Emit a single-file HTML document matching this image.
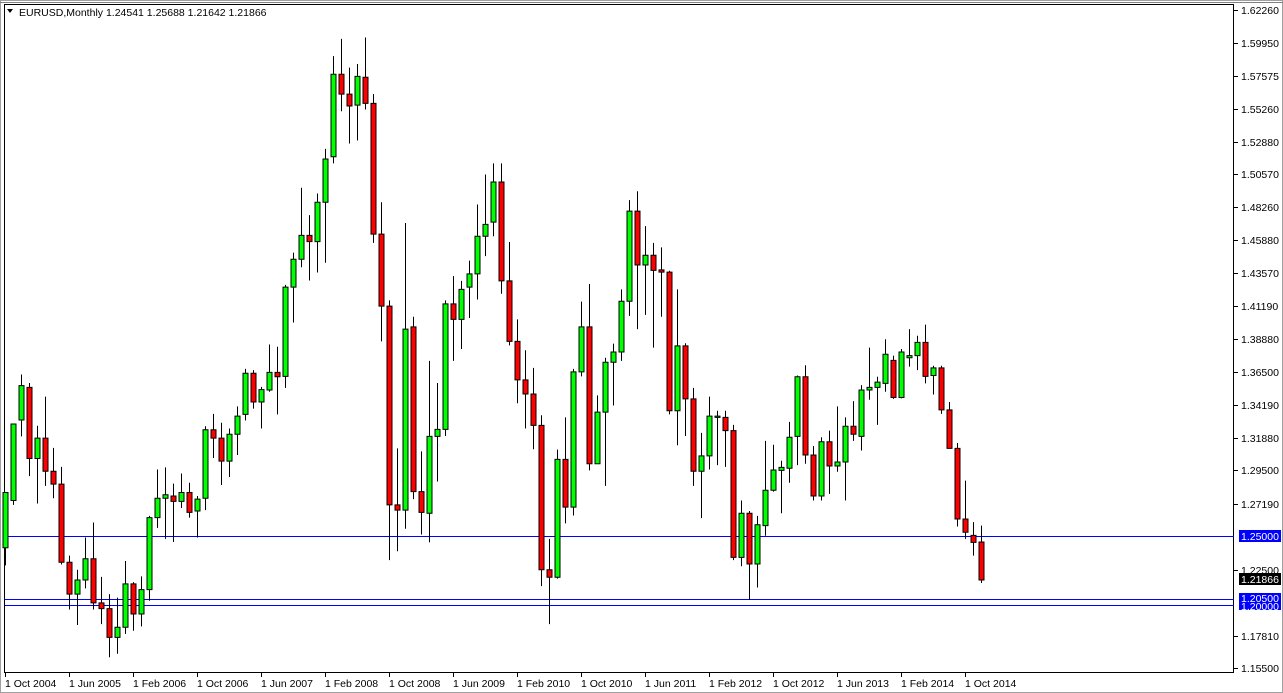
<!DOCTYPE html>
<html><head><meta charset="utf-8"><style>
html,body{margin:0;padding:0;background:#fff;width:1283px;height:693px;overflow:hidden}
svg{display:block}
text{font-family:"Liberation Sans",sans-serif;font-size:10.5px;fill:#000}
</style></head><body>
<svg width="1283" height="693" viewBox="0 0 1283 693" xmlns="http://www.w3.org/2000/svg">
<rect x="0" y="0" width="1283" height="693" fill="#fff"/>
<rect x="0.5" y="0.5" width="1282" height="692" fill="none" stroke="#a0a0a0"/>
<line x1="0" y1="2.5" x2="1283" y2="2.5" stroke="#808080"/>
<rect x="4.5" y="4.5" width="1229" height="668" fill="none" stroke="#000"/>
<!-- horizontal lines -->
<line x1="5" y1="536.5" x2="1234" y2="536.5" stroke="#0000ff"/>
<line x1="5" y1="599.5" x2="1234" y2="599.5" stroke="#0000ff"/>
<line x1="5" y1="605.5" x2="1234" y2="605.5" stroke="#0000ff"/>
<g transform="scale(1,0.4417)" stroke="#000" stroke-width="1">
<g id="c">
<line x1="5.5" y1="1115" x2="5.5" y2="1280" vector-effect="non-scaling-stroke"/><rect x="3" y="1115" width="5" height="125" fill="#00ff00" vector-effect="non-scaling-stroke"/>
<line x1="13.5" y1="960" x2="13.5" y2="1143" vector-effect="non-scaling-stroke"/><rect x="11" y="960" width="5" height="173" fill="#00ff00" vector-effect="non-scaling-stroke"/>
<line x1="21.5" y1="848" x2="21.5" y2="988" vector-effect="non-scaling-stroke"/><rect x="19" y="873" width="5" height="78" fill="#00ff00" vector-effect="non-scaling-stroke"/>
<line x1="29.5" y1="867" x2="29.5" y2="1078" vector-effect="non-scaling-stroke"/><rect x="27" y="877" width="5" height="161" fill="#ff0000" vector-effect="non-scaling-stroke"/>
<line x1="37.5" y1="964" x2="37.5" y2="1140" vector-effect="non-scaling-stroke"/><rect x="35" y="992" width="5" height="46" fill="#00ff00" vector-effect="non-scaling-stroke"/>
<line x1="45.5" y1="898" x2="45.5" y2="1100" vector-effect="non-scaling-stroke"/><rect x="43" y="992" width="5" height="75" fill="#ff0000" vector-effect="non-scaling-stroke"/>
<line x1="53.5" y1="1014" x2="53.5" y2="1128" vector-effect="non-scaling-stroke"/><rect x="51" y="1067" width="5" height="29" fill="#ff0000" vector-effect="non-scaling-stroke"/>
<line x1="61.5" y1="1057" x2="61.5" y2="1278" vector-effect="non-scaling-stroke"/><rect x="59" y="1096" width="5" height="177" fill="#ff0000" vector-effect="non-scaling-stroke"/>
<line x1="69.5" y1="1258" x2="69.5" y2="1380" vector-effect="non-scaling-stroke"/><rect x="67" y="1273" width="5" height="72" fill="#ff0000" vector-effect="non-scaling-stroke"/>
<line x1="77.5" y1="1290" x2="77.5" y2="1415" vector-effect="non-scaling-stroke"/><rect x="75" y="1313" width="5" height="32" fill="#00ff00" vector-effect="non-scaling-stroke"/>
<line x1="85.5" y1="1217" x2="85.5" y2="1332" vector-effect="non-scaling-stroke"/><rect x="83" y="1265" width="5" height="48" fill="#00ff00" vector-effect="non-scaling-stroke"/>
<line x1="93.5" y1="1183" x2="93.5" y2="1380" vector-effect="non-scaling-stroke"/><rect x="91" y="1265" width="5" height="100" fill="#ff0000" vector-effect="non-scaling-stroke"/>
<line x1="101.5" y1="1306" x2="101.5" y2="1413" vector-effect="non-scaling-stroke"/><rect x="99" y="1365" width="5" height="13" fill="#ff0000" vector-effect="non-scaling-stroke"/>
<line x1="109.5" y1="1345" x2="109.5" y2="1488" vector-effect="non-scaling-stroke"/><rect x="107" y="1378" width="5" height="65" fill="#ff0000" vector-effect="non-scaling-stroke"/>
<line x1="117.5" y1="1353" x2="117.5" y2="1480" vector-effect="non-scaling-stroke"/><rect x="115" y="1420" width="5" height="23" fill="#00ff00" vector-effect="non-scaling-stroke"/>
<line x1="125.5" y1="1270" x2="125.5" y2="1435" vector-effect="non-scaling-stroke"/><rect x="123" y="1322" width="5" height="98" fill="#00ff00" vector-effect="non-scaling-stroke"/>
<line x1="133.5" y1="1318" x2="133.5" y2="1428" vector-effect="non-scaling-stroke"/><rect x="131" y="1322" width="5" height="68" fill="#ff0000" vector-effect="non-scaling-stroke"/>
<line x1="141.5" y1="1305" x2="141.5" y2="1418" vector-effect="non-scaling-stroke"/><rect x="139" y="1335" width="5" height="55" fill="#00ff00" vector-effect="non-scaling-stroke"/>
<line x1="149.5" y1="1168" x2="149.5" y2="1360" vector-effect="non-scaling-stroke"/><rect x="147" y="1172" width="5" height="163" fill="#00ff00" vector-effect="non-scaling-stroke"/>
<line x1="157.5" y1="1063" x2="157.5" y2="1195" vector-effect="non-scaling-stroke"/><rect x="155" y="1128" width="5" height="44" fill="#00ff00" vector-effect="non-scaling-stroke"/>
<line x1="165.5" y1="1058" x2="165.5" y2="1220" vector-effect="non-scaling-stroke"/><rect x="163" y="1120" width="5" height="8" fill="#00ff00" vector-effect="non-scaling-stroke"/>
<line x1="173.5" y1="1095" x2="173.5" y2="1227" vector-effect="non-scaling-stroke"/><rect x="171" y="1123" width="5" height="12" fill="#ff0000" vector-effect="non-scaling-stroke"/>
<line x1="181.5" y1="1072" x2="181.5" y2="1150" vector-effect="non-scaling-stroke"/><rect x="179" y="1115" width="5" height="20" fill="#00ff00" vector-effect="non-scaling-stroke"/>
<line x1="189.5" y1="1093" x2="189.5" y2="1172" vector-effect="non-scaling-stroke"/><rect x="187" y="1115" width="5" height="45" fill="#ff0000" vector-effect="non-scaling-stroke"/>
<line x1="197.5" y1="1123" x2="197.5" y2="1217" vector-effect="non-scaling-stroke"/><rect x="195" y="1130" width="5" height="27" fill="#00ff00" vector-effect="non-scaling-stroke"/>
<line x1="205.5" y1="965" x2="205.5" y2="1155" vector-effect="non-scaling-stroke"/><rect x="203" y="973" width="5" height="155" fill="#00ff00" vector-effect="non-scaling-stroke"/>
<line x1="213.5" y1="937" x2="213.5" y2="1037" vector-effect="non-scaling-stroke"/><rect x="211" y="973" width="5" height="19" fill="#ff0000" vector-effect="non-scaling-stroke"/>
<line x1="221.5" y1="957" x2="221.5" y2="1098" vector-effect="non-scaling-stroke"/><rect x="219" y="992" width="5" height="52" fill="#ff0000" vector-effect="non-scaling-stroke"/>
<line x1="229.5" y1="970" x2="229.5" y2="1080" vector-effect="non-scaling-stroke"/><rect x="227" y="983" width="5" height="61" fill="#00ff00" vector-effect="non-scaling-stroke"/>
<line x1="237.5" y1="920" x2="237.5" y2="1030" vector-effect="non-scaling-stroke"/><rect x="235" y="942" width="5" height="41" fill="#00ff00" vector-effect="non-scaling-stroke"/>
<line x1="245.5" y1="835" x2="245.5" y2="952" vector-effect="non-scaling-stroke"/><rect x="243" y="845" width="5" height="93" fill="#00ff00" vector-effect="non-scaling-stroke"/>
<line x1="253.5" y1="838" x2="253.5" y2="925" vector-effect="non-scaling-stroke"/><rect x="251" y="845" width="5" height="65" fill="#ff0000" vector-effect="non-scaling-stroke"/>
<line x1="261.5" y1="876" x2="261.5" y2="970" vector-effect="non-scaling-stroke"/><rect x="259" y="882" width="5" height="28" fill="#00ff00" vector-effect="non-scaling-stroke"/>
<line x1="269.5" y1="780" x2="269.5" y2="887" vector-effect="non-scaling-stroke"/><rect x="267" y="843" width="5" height="40" fill="#00ff00" vector-effect="non-scaling-stroke"/>
<line x1="277.5" y1="785" x2="277.5" y2="938" vector-effect="non-scaling-stroke"/><rect x="275" y="843" width="5" height="10" fill="#ff0000" vector-effect="non-scaling-stroke"/>
<line x1="285.5" y1="645" x2="285.5" y2="878" vector-effect="non-scaling-stroke"/><rect x="283" y="650" width="5" height="202" fill="#00ff00" vector-effect="non-scaling-stroke"/>
<line x1="293.5" y1="572" x2="293.5" y2="730" vector-effect="non-scaling-stroke"/><rect x="291" y="587" width="5" height="63" fill="#00ff00" vector-effect="non-scaling-stroke"/>
<line x1="301.5" y1="425" x2="301.5" y2="605" vector-effect="non-scaling-stroke"/><rect x="299" y="533" width="5" height="54" fill="#00ff00" vector-effect="non-scaling-stroke"/>
<line x1="309.5" y1="487" x2="309.5" y2="635" vector-effect="non-scaling-stroke"/><rect x="307" y="533" width="5" height="14" fill="#ff0000" vector-effect="non-scaling-stroke"/>
<line x1="317.5" y1="438" x2="317.5" y2="617" vector-effect="non-scaling-stroke"/><rect x="315" y="458" width="5" height="89" fill="#00ff00" vector-effect="non-scaling-stroke"/>
<line x1="325.5" y1="337" x2="325.5" y2="595" vector-effect="non-scaling-stroke"/><rect x="323" y="360" width="5" height="98" fill="#00ff00" vector-effect="non-scaling-stroke"/>
<line x1="333.5" y1="127" x2="333.5" y2="370" vector-effect="non-scaling-stroke"/><rect x="331" y="168" width="5" height="187" fill="#00ff00" vector-effect="non-scaling-stroke"/>
<line x1="341.5" y1="88" x2="341.5" y2="252" vector-effect="non-scaling-stroke"/><rect x="339" y="168" width="5" height="45" fill="#ff0000" vector-effect="non-scaling-stroke"/>
<line x1="349.5" y1="153" x2="349.5" y2="325" vector-effect="non-scaling-stroke"/><rect x="347" y="213" width="5" height="27" fill="#ff0000" vector-effect="non-scaling-stroke"/>
<line x1="357.5" y1="145" x2="357.5" y2="318" vector-effect="non-scaling-stroke"/><rect x="355" y="173" width="5" height="65" fill="#00ff00" vector-effect="non-scaling-stroke"/>
<line x1="365.5" y1="85" x2="365.5" y2="248" vector-effect="non-scaling-stroke"/><rect x="363" y="175" width="5" height="59" fill="#ff0000" vector-effect="non-scaling-stroke"/>
<line x1="373.5" y1="213" x2="373.5" y2="550" vector-effect="non-scaling-stroke"/><rect x="371" y="234" width="5" height="296" fill="#ff0000" vector-effect="non-scaling-stroke"/>
<line x1="381.5" y1="458" x2="381.5" y2="773" vector-effect="non-scaling-stroke"/><rect x="379" y="530" width="5" height="163" fill="#ff0000" vector-effect="non-scaling-stroke"/>
<line x1="389.5" y1="680" x2="389.5" y2="1268" vector-effect="non-scaling-stroke"/><rect x="387" y="693" width="5" height="450" fill="#ff0000" vector-effect="non-scaling-stroke"/>
<line x1="397.5" y1="1015" x2="397.5" y2="1248" vector-effect="non-scaling-stroke"/><rect x="395" y="1143" width="5" height="12" fill="#ff0000" vector-effect="non-scaling-stroke"/>
<line x1="405.5" y1="505" x2="405.5" y2="1197" vector-effect="non-scaling-stroke"/><rect x="403" y="745" width="5" height="410" fill="#00ff00" vector-effect="non-scaling-stroke"/>
<line x1="413.5" y1="717" x2="413.5" y2="1130" vector-effect="non-scaling-stroke"/><rect x="411" y="740" width="5" height="373" fill="#ff0000" vector-effect="non-scaling-stroke"/>
<line x1="421.5" y1="1022" x2="421.5" y2="1210" vector-effect="non-scaling-stroke"/><rect x="419" y="1113" width="5" height="47" fill="#ff0000" vector-effect="non-scaling-stroke"/>
<line x1="429.5" y1="817" x2="429.5" y2="1228" vector-effect="non-scaling-stroke"/><rect x="427" y="988" width="5" height="174" fill="#00ff00" vector-effect="non-scaling-stroke"/>
<line x1="437.5" y1="867" x2="437.5" y2="1090" vector-effect="non-scaling-stroke"/><rect x="435" y="972" width="5" height="16" fill="#00ff00" vector-effect="non-scaling-stroke"/>
<line x1="445.5" y1="680" x2="445.5" y2="987" vector-effect="non-scaling-stroke"/><rect x="443" y="688" width="5" height="284" fill="#00ff00" vector-effect="non-scaling-stroke"/>
<line x1="453.5" y1="625" x2="453.5" y2="817" vector-effect="non-scaling-stroke"/><rect x="451" y="688" width="5" height="35" fill="#ff0000" vector-effect="non-scaling-stroke"/>
<line x1="461.5" y1="636" x2="461.5" y2="790" vector-effect="non-scaling-stroke"/><rect x="459" y="655" width="5" height="68" fill="#00ff00" vector-effect="non-scaling-stroke"/>
<line x1="469.5" y1="590" x2="469.5" y2="720" vector-effect="non-scaling-stroke"/><rect x="467" y="620" width="5" height="30" fill="#00ff00" vector-effect="non-scaling-stroke"/>
<line x1="477.5" y1="463" x2="477.5" y2="678" vector-effect="non-scaling-stroke"/><rect x="475" y="535" width="5" height="85" fill="#00ff00" vector-effect="non-scaling-stroke"/>
<line x1="485.5" y1="395" x2="485.5" y2="580" vector-effect="non-scaling-stroke"/><rect x="483" y="508" width="5" height="27" fill="#00ff00" vector-effect="non-scaling-stroke"/>
<line x1="493.5" y1="370" x2="493.5" y2="535" vector-effect="non-scaling-stroke"/><rect x="491" y="412" width="5" height="91" fill="#00ff00" vector-effect="non-scaling-stroke"/>
<line x1="501.5" y1="370" x2="501.5" y2="665" vector-effect="non-scaling-stroke"/><rect x="499" y="412" width="5" height="224" fill="#ff0000" vector-effect="non-scaling-stroke"/>
<line x1="509.5" y1="548" x2="509.5" y2="782" vector-effect="non-scaling-stroke"/><rect x="507" y="636" width="5" height="137" fill="#ff0000" vector-effect="non-scaling-stroke"/>
<line x1="517.5" y1="723" x2="517.5" y2="913" vector-effect="non-scaling-stroke"/><rect x="515" y="773" width="5" height="87" fill="#ff0000" vector-effect="non-scaling-stroke"/>
<line x1="525.5" y1="793" x2="525.5" y2="970" vector-effect="non-scaling-stroke"/><rect x="523" y="860" width="5" height="32" fill="#ff0000" vector-effect="non-scaling-stroke"/>
<line x1="533.5" y1="833" x2="533.5" y2="1017" vector-effect="non-scaling-stroke"/><rect x="531" y="892" width="5" height="71" fill="#ff0000" vector-effect="non-scaling-stroke"/>
<line x1="541.5" y1="940" x2="541.5" y2="1327" vector-effect="non-scaling-stroke"/><rect x="539" y="963" width="5" height="327" fill="#ff0000" vector-effect="non-scaling-stroke"/>
<line x1="549.5" y1="1220" x2="549.5" y2="1413" vector-effect="non-scaling-stroke"/><rect x="547" y="1290" width="5" height="17" fill="#ff0000" vector-effect="non-scaling-stroke"/>
<line x1="557.5" y1="1018" x2="557.5" y2="1310" vector-effect="non-scaling-stroke"/><rect x="555" y="1040" width="5" height="267" fill="#00ff00" vector-effect="non-scaling-stroke"/>
<line x1="565.5" y1="945" x2="565.5" y2="1185" vector-effect="non-scaling-stroke"/><rect x="563" y="1040" width="5" height="108" fill="#ff0000" vector-effect="non-scaling-stroke"/>
<line x1="573.5" y1="835" x2="573.5" y2="1167" vector-effect="non-scaling-stroke"/><rect x="571" y="842" width="5" height="306" fill="#00ff00" vector-effect="non-scaling-stroke"/>
<line x1="581.5" y1="683" x2="581.5" y2="852" vector-effect="non-scaling-stroke"/><rect x="579" y="740" width="5" height="102" fill="#00ff00" vector-effect="non-scaling-stroke"/>
<line x1="589.5" y1="643" x2="589.5" y2="1065" vector-effect="non-scaling-stroke"/><rect x="587" y="740" width="5" height="310" fill="#ff0000" vector-effect="non-scaling-stroke"/>
<line x1="597.5" y1="895" x2="597.5" y2="1050" vector-effect="non-scaling-stroke"/><rect x="595" y="933" width="5" height="117" fill="#00ff00" vector-effect="non-scaling-stroke"/>
<line x1="605.5" y1="810" x2="605.5" y2="1100" vector-effect="non-scaling-stroke"/><rect x="603" y="820" width="5" height="113" fill="#00ff00" vector-effect="non-scaling-stroke"/>
<line x1="613.5" y1="778" x2="613.5" y2="918" vector-effect="non-scaling-stroke"/><rect x="611" y="797" width="5" height="23" fill="#00ff00" vector-effect="non-scaling-stroke"/>
<line x1="621.5" y1="655" x2="621.5" y2="817" vector-effect="non-scaling-stroke"/><rect x="619" y="682" width="5" height="115" fill="#00ff00" vector-effect="non-scaling-stroke"/>
<line x1="629.5" y1="453" x2="629.5" y2="715" vector-effect="non-scaling-stroke"/><rect x="627" y="478" width="5" height="204" fill="#00ff00" vector-effect="non-scaling-stroke"/>
<line x1="637.5" y1="433" x2="637.5" y2="745" vector-effect="non-scaling-stroke"/><rect x="635" y="478" width="5" height="122" fill="#ff0000" vector-effect="non-scaling-stroke"/>
<line x1="645.5" y1="512" x2="645.5" y2="713" vector-effect="non-scaling-stroke"/><rect x="643" y="578" width="5" height="22" fill="#00ff00" vector-effect="non-scaling-stroke"/>
<line x1="653.5" y1="550" x2="653.5" y2="787" vector-effect="non-scaling-stroke"/><rect x="651" y="578" width="5" height="34" fill="#ff0000" vector-effect="non-scaling-stroke"/>
<line x1="661.5" y1="560" x2="661.5" y2="717" vector-effect="non-scaling-stroke"/><rect x="659" y="611" width="5" height="5" fill="#ff0000" vector-effect="non-scaling-stroke"/>
<line x1="669.5" y1="613" x2="669.5" y2="938" vector-effect="non-scaling-stroke"/><rect x="667" y="616" width="5" height="314" fill="#ff0000" vector-effect="non-scaling-stroke"/>
<line x1="677.5" y1="655" x2="677.5" y2="1008" vector-effect="non-scaling-stroke"/><rect x="675" y="783" width="5" height="147" fill="#00ff00" vector-effect="non-scaling-stroke"/>
<line x1="685.5" y1="777" x2="685.5" y2="987" vector-effect="non-scaling-stroke"/><rect x="683" y="783" width="5" height="120" fill="#ff0000" vector-effect="non-scaling-stroke"/>
<line x1="693.5" y1="878" x2="693.5" y2="1100" vector-effect="non-scaling-stroke"/><rect x="691" y="903" width="5" height="164" fill="#ff0000" vector-effect="non-scaling-stroke"/>
<line x1="701.5" y1="980" x2="701.5" y2="1173" vector-effect="non-scaling-stroke"/><rect x="699" y="1032" width="5" height="35" fill="#00ff00" vector-effect="non-scaling-stroke"/>
<line x1="709.5" y1="898" x2="709.5" y2="1063" vector-effect="non-scaling-stroke"/><rect x="707" y="942" width="5" height="90" fill="#00ff00" vector-effect="non-scaling-stroke"/>
<line x1="717.5" y1="930" x2="717.5" y2="1053" vector-effect="non-scaling-stroke"/><rect x="715" y="942" width="5" height="3" fill="#00ff00" vector-effect="non-scaling-stroke"/>
<line x1="725.5" y1="930" x2="725.5" y2="1057" vector-effect="non-scaling-stroke"/><rect x="723" y="945" width="5" height="30" fill="#ff0000" vector-effect="non-scaling-stroke"/>
<line x1="733.5" y1="962" x2="733.5" y2="1268" vector-effect="non-scaling-stroke"/><rect x="731" y="975" width="5" height="287" fill="#ff0000" vector-effect="non-scaling-stroke"/>
<line x1="741.5" y1="1133" x2="741.5" y2="1282" vector-effect="non-scaling-stroke"/><rect x="739" y="1162" width="5" height="100" fill="#00ff00" vector-effect="non-scaling-stroke"/>
<line x1="749.5" y1="1157" x2="749.5" y2="1358" vector-effect="non-scaling-stroke"/><rect x="747" y="1162" width="5" height="115" fill="#ff0000" vector-effect="non-scaling-stroke"/>
<line x1="757.5" y1="1168" x2="757.5" y2="1330" vector-effect="non-scaling-stroke"/><rect x="755" y="1188" width="5" height="89" fill="#00ff00" vector-effect="non-scaling-stroke"/>
<line x1="765.5" y1="998" x2="765.5" y2="1213" vector-effect="non-scaling-stroke"/><rect x="763" y="1110" width="5" height="80" fill="#00ff00" vector-effect="non-scaling-stroke"/>
<line x1="773.5" y1="1007" x2="773.5" y2="1113" vector-effect="non-scaling-stroke"/><rect x="771" y="1064" width="5" height="46" fill="#00ff00" vector-effect="non-scaling-stroke"/>
<line x1="781.5" y1="1043" x2="781.5" y2="1162" vector-effect="non-scaling-stroke"/><rect x="779" y="1058" width="5" height="7" fill="#00ff00" vector-effect="non-scaling-stroke"/>
<line x1="789.5" y1="955" x2="789.5" y2="1093" vector-effect="non-scaling-stroke"/><rect x="787" y="990" width="5" height="70" fill="#00ff00" vector-effect="non-scaling-stroke"/>
<line x1="797.5" y1="850" x2="797.5" y2="1053" vector-effect="non-scaling-stroke"/><rect x="795" y="853" width="5" height="135" fill="#00ff00" vector-effect="non-scaling-stroke"/>
<line x1="805.5" y1="827" x2="805.5" y2="1050" vector-effect="non-scaling-stroke"/><rect x="803" y="853" width="5" height="177" fill="#ff0000" vector-effect="non-scaling-stroke"/>
<line x1="813.5" y1="1010" x2="813.5" y2="1133" vector-effect="non-scaling-stroke"/><rect x="811" y="1030" width="5" height="93" fill="#ff0000" vector-effect="non-scaling-stroke"/>
<line x1="821.5" y1="990" x2="821.5" y2="1133" vector-effect="non-scaling-stroke"/><rect x="819" y="1000" width="5" height="123" fill="#00ff00" vector-effect="non-scaling-stroke"/>
<line x1="829.5" y1="975" x2="829.5" y2="1118" vector-effect="non-scaling-stroke"/><rect x="827" y="1000" width="5" height="55" fill="#ff0000" vector-effect="non-scaling-stroke"/>
<line x1="837.5" y1="920" x2="837.5" y2="1068" vector-effect="non-scaling-stroke"/><rect x="835" y="1046" width="5" height="9" fill="#00ff00" vector-effect="non-scaling-stroke"/>
<line x1="845.5" y1="945" x2="845.5" y2="1133" vector-effect="non-scaling-stroke"/><rect x="843" y="965" width="5" height="81" fill="#00ff00" vector-effect="non-scaling-stroke"/>
<line x1="853.5" y1="908" x2="853.5" y2="998" vector-effect="non-scaling-stroke"/><rect x="851" y="965" width="5" height="18" fill="#ff0000" vector-effect="non-scaling-stroke"/>
<line x1="861.5" y1="872" x2="861.5" y2="1020" vector-effect="non-scaling-stroke"/><rect x="859" y="883" width="5" height="105" fill="#00ff00" vector-effect="non-scaling-stroke"/>
<line x1="869.5" y1="787" x2="869.5" y2="905" vector-effect="non-scaling-stroke"/><rect x="867" y="877" width="5" height="6" fill="#00ff00" vector-effect="non-scaling-stroke"/>
<line x1="877.5" y1="853" x2="877.5" y2="962" vector-effect="non-scaling-stroke"/><rect x="875" y="865" width="5" height="12" fill="#00ff00" vector-effect="non-scaling-stroke"/>
<line x1="885.5" y1="768" x2="885.5" y2="887" vector-effect="non-scaling-stroke"/><rect x="883" y="802" width="5" height="66" fill="#00ff00" vector-effect="non-scaling-stroke"/>
<line x1="893.5" y1="805" x2="893.5" y2="903" vector-effect="non-scaling-stroke"/><rect x="891" y="816" width="5" height="84" fill="#ff0000" vector-effect="non-scaling-stroke"/>
<line x1="901.5" y1="790" x2="901.5" y2="902" vector-effect="non-scaling-stroke"/><rect x="899" y="797" width="5" height="103" fill="#00ff00" vector-effect="non-scaling-stroke"/>
<line x1="909.5" y1="745" x2="909.5" y2="830" vector-effect="non-scaling-stroke"/><rect x="907" y="805" width="5" height="5" fill="#00ff00" vector-effect="non-scaling-stroke"/>
<line x1="917.5" y1="760" x2="917.5" y2="838" vector-effect="non-scaling-stroke"/><rect x="915" y="775" width="5" height="30" fill="#00ff00" vector-effect="non-scaling-stroke"/>
<line x1="925.5" y1="735" x2="925.5" y2="868" vector-effect="non-scaling-stroke"/><rect x="923" y="775" width="5" height="77" fill="#ff0000" vector-effect="non-scaling-stroke"/>
<line x1="933.5" y1="828" x2="933.5" y2="893" vector-effect="non-scaling-stroke"/><rect x="931" y="833" width="5" height="17" fill="#00ff00" vector-effect="non-scaling-stroke"/>
<line x1="941.5" y1="828" x2="941.5" y2="937" vector-effect="non-scaling-stroke"/><rect x="939" y="833" width="5" height="95" fill="#ff0000" vector-effect="non-scaling-stroke"/>
<line x1="949.5" y1="910" x2="949.5" y2="1015" vector-effect="non-scaling-stroke"/><rect x="947" y="928" width="5" height="87" fill="#ff0000" vector-effect="non-scaling-stroke"/>
<line x1="957.5" y1="1003" x2="957.5" y2="1192" vector-effect="non-scaling-stroke"/><rect x="955" y="1015" width="5" height="160" fill="#ff0000" vector-effect="non-scaling-stroke"/>
<line x1="965.5" y1="1088" x2="965.5" y2="1220" vector-effect="non-scaling-stroke"/><rect x="963" y="1175" width="5" height="30" fill="#ff0000" vector-effect="non-scaling-stroke"/>
<line x1="973.5" y1="1182" x2="973.5" y2="1258" vector-effect="non-scaling-stroke"/><rect x="971" y="1212" width="5" height="16" fill="#ff0000" vector-effect="non-scaling-stroke"/>
<line x1="981.5" y1="1190" x2="981.5" y2="1320" vector-effect="non-scaling-stroke"/><rect x="979" y="1227" width="5" height="86" fill="#ff0000" vector-effect="non-scaling-stroke"/>
</g>
</g>
<!-- header -->
<polygon points="7,9 13,9 10,13" fill="#000"/>
<text x="19" y="16">EURUSD,Monthly  1.24541 1.25688 1.21642 1.21866</text>
<!-- right axis -->
<g stroke="#000">
<line x1="1234" y1="10.5" x2="1238" y2="10.5"/><line x1="1234" y1="43.5" x2="1238" y2="43.5"/><line x1="1234" y1="76.5" x2="1238" y2="76.5"/><line x1="1234" y1="109.5" x2="1238" y2="109.5"/><line x1="1234" y1="142.5" x2="1238" y2="142.5"/><line x1="1234" y1="174.5" x2="1238" y2="174.5"/><line x1="1234" y1="207.5" x2="1238" y2="207.5"/><line x1="1234" y1="240.5" x2="1238" y2="240.5"/><line x1="1234" y1="273.5" x2="1238" y2="273.5"/><line x1="1234" y1="306.5" x2="1238" y2="306.5"/><line x1="1234" y1="339.5" x2="1238" y2="339.5"/><line x1="1234" y1="372.5" x2="1238" y2="372.5"/><line x1="1234" y1="405.5" x2="1238" y2="405.5"/><line x1="1234" y1="438.5" x2="1238" y2="438.5"/><line x1="1234" y1="470.5" x2="1238" y2="470.5"/><line x1="1234" y1="504.5" x2="1238" y2="504.5"/><line x1="1234" y1="570.5" x2="1238" y2="570.5"/><line x1="1234" y1="636.5" x2="1238" y2="636.5"/><line x1="1234" y1="668.5" x2="1238" y2="668.5"/>
</g>
<g>
<text x="1241" y="14">1.62260</text><text x="1241" y="47">1.59950</text><text x="1241" y="80">1.57575</text><text x="1241" y="113">1.55260</text><text x="1241" y="146">1.52880</text><text x="1241" y="178">1.50570</text><text x="1241" y="211">1.48260</text><text x="1241" y="244">1.45880</text><text x="1241" y="277">1.43570</text><text x="1241" y="310">1.41190</text><text x="1241" y="343">1.38880</text><text x="1241" y="376">1.36500</text><text x="1241" y="409">1.34190</text><text x="1241" y="442">1.31880</text><text x="1241" y="474">1.29500</text><text x="1241" y="508">1.27190</text><text x="1241" y="574">1.22500</text><text x="1241" y="640">1.17810</text><text x="1241" y="672">1.15500</text>
</g>
<rect x="1239" y="530" width="42" height="12" fill="#0000ff"/><text x="1241" y="540" style="fill:#fff">1.25000</text>
<rect x="1239" y="573" width="42" height="12" fill="#000"/><text x="1241" y="583" style="fill:#fff">1.21866</text>
<rect x="1239" y="593" width="42" height="17" fill="#0000ff"/><text x="1241" y="602" style="fill:#fff">1.20500</text><text x="1241" y="610" style="fill:#fff">1.20000</text>
<!-- bottom axis -->
<g stroke="#000">
<line x1="5.5" y1="673" x2="5.5" y2="677"/><line x1="69.5" y1="673" x2="69.5" y2="677"/><line x1="133.5" y1="673" x2="133.5" y2="677"/><line x1="197.5" y1="673" x2="197.5" y2="677"/><line x1="261.5" y1="673" x2="261.5" y2="677"/><line x1="325.5" y1="673" x2="325.5" y2="677"/><line x1="389.5" y1="673" x2="389.5" y2="677"/><line x1="453.5" y1="673" x2="453.5" y2="677"/><line x1="517.5" y1="673" x2="517.5" y2="677"/><line x1="581.5" y1="673" x2="581.5" y2="677"/><line x1="645.5" y1="673" x2="645.5" y2="677"/><line x1="709.5" y1="673" x2="709.5" y2="677"/><line x1="773.5" y1="673" x2="773.5" y2="677"/><line x1="837.5" y1="673" x2="837.5" y2="677"/><line x1="901.5" y1="673" x2="901.5" y2="677"/><line x1="965.5" y1="673" x2="965.5" y2="677"/>
</g>
<g>
<text x="5" y="687">1 Oct 2004</text><text x="69" y="687">1 Jun 2005</text><text x="133" y="687">1 Feb 2006</text><text x="197" y="687">1 Oct 2006</text><text x="261" y="687">1 Jun 2007</text><text x="325" y="687">1 Feb 2008</text><text x="389" y="687">1 Oct 2008</text><text x="453" y="687">1 Jun 2009</text><text x="517" y="687">1 Feb 2010</text><text x="581" y="687">1 Oct 2010</text><text x="645" y="687">1 Jun 2011</text><text x="709" y="687">1 Feb 2012</text><text x="773" y="687">1 Oct 2012</text><text x="837" y="687">1 Jun 2013</text><text x="901" y="687">1 Feb 2014</text><text x="965" y="687">1 Oct 2014</text>
</g>
</svg>
</body></html>
